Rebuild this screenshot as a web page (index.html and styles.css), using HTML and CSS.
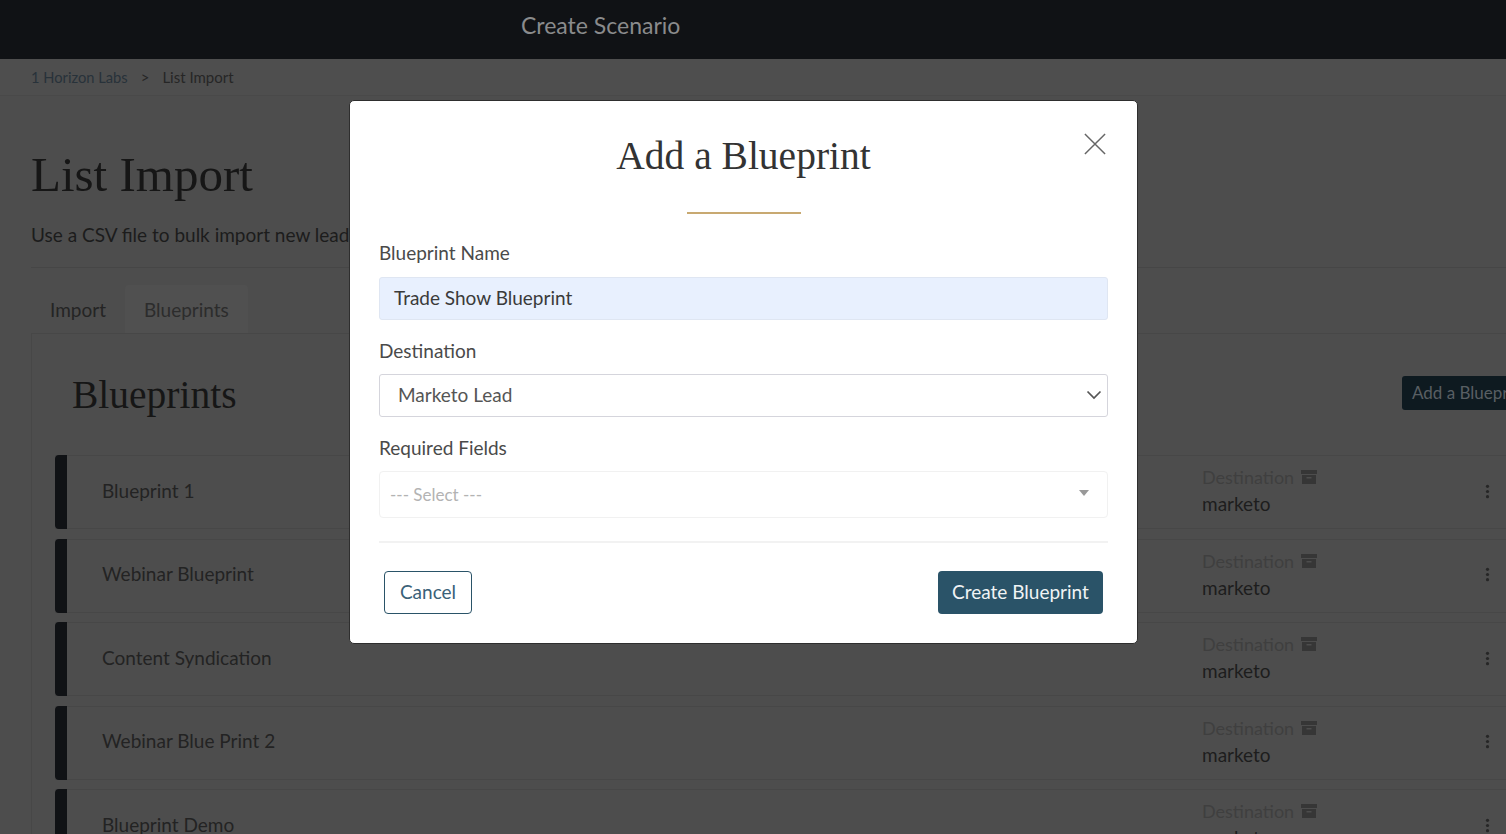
FILE: index.html
```html
<!DOCTYPE html>
<html lang="en">
<head>
  <meta charset="UTF-8">
  <title>List Import</title>
  <link rel="stylesheet" href="styles.css">
</head>
<body>
  <header class="topbar">
    <span class="topbar-title">Create Scenario</span>
  </header>

  <nav class="crumbs">
    <a class="crumb-link">1 Horizon Labs</a>
    <span class="crumb-sep">&gt;</span>
    <span>List Import</span>
  </nav>

  <main class="page">
    <h1>List Import</h1>
    <p class="lead">Use a CSV file to bulk import new leads</p>

    <div class="tabs">
      <a class="tab">Import</a>
      <a class="tab tab-active">Blueprints</a>
    </div>

    <section class="card">
      <div class="card-head">
        <h2>Blueprints</h2>
        <button class="add-btn">Add a Blueprint</button>
      </div>

      <div class="row">
        <span class="row-bar"></span>
        <span class="row-name">Blueprint 1</span>
        <div class="row-dest">
          <div class="dest-label">Destination
            <svg class="box-icon" viewBox="0 0 16 16"><path d="M0 1h16v4H0zM1 6h14v9H1zM5.500 8v1.500h5V8z" fill-rule="evenodd"/></svg>
          </div>
          <div class="dest-value">marketo</div>
        </div>
        <svg class="dots" viewBox="0 0 4 16"><circle cx="2" cy="2.500" r="1.700"/><circle cx="2" cy="8" r="1.700"/><circle cx="2" cy="13.500" r="1.700"/></svg>
      </div>

      <div class="row">
        <span class="row-bar"></span>
        <span class="row-name">Webinar Blueprint</span>
        <div class="row-dest">
          <div class="dest-label">Destination
            <svg class="box-icon" viewBox="0 0 16 16"><path d="M0 1h16v4H0zM1 6h14v9H1zM5.500 8v1.500h5V8z" fill-rule="evenodd"/></svg>
          </div>
          <div class="dest-value">marketo</div>
        </div>
        <svg class="dots" viewBox="0 0 4 16"><circle cx="2" cy="2.500" r="1.700"/><circle cx="2" cy="8" r="1.700"/><circle cx="2" cy="13.500" r="1.700"/></svg>
      </div>

      <div class="row">
        <span class="row-bar"></span>
        <span class="row-name">Content Syndication</span>
        <div class="row-dest">
          <div class="dest-label">Destination
            <svg class="box-icon" viewBox="0 0 16 16"><path d="M0 1h16v4H0zM1 6h14v9H1zM5.500 8v1.500h5V8z" fill-rule="evenodd"/></svg>
          </div>
          <div class="dest-value">marketo</div>
        </div>
        <svg class="dots" viewBox="0 0 4 16"><circle cx="2" cy="2.500" r="1.700"/><circle cx="2" cy="8" r="1.700"/><circle cx="2" cy="13.500" r="1.700"/></svg>
      </div>

      <div class="row">
        <span class="row-bar"></span>
        <span class="row-name">Webinar Blue Print 2</span>
        <div class="row-dest">
          <div class="dest-label">Destination
            <svg class="box-icon" viewBox="0 0 16 16"><path d="M0 1h16v4H0zM1 6h14v9H1zM5.500 8v1.500h5V8z" fill-rule="evenodd"/></svg>
          </div>
          <div class="dest-value">marketo</div>
        </div>
        <svg class="dots" viewBox="0 0 4 16"><circle cx="2" cy="2.500" r="1.700"/><circle cx="2" cy="8" r="1.700"/><circle cx="2" cy="13.500" r="1.700"/></svg>
      </div>

      <div class="row">
        <span class="row-bar"></span>
        <span class="row-name">Blueprint Demo</span>
        <div class="row-dest">
          <div class="dest-label">Destination
            <svg class="box-icon" viewBox="0 0 16 16"><path d="M0 1h16v4H0zM1 6h14v9H1zM5.500 8v1.500h5V8z" fill-rule="evenodd"/></svg>
          </div>
          <div class="dest-value">marketo</div>
        </div>
        <svg class="dots" viewBox="0 0 4 16"><circle cx="2" cy="2.500" r="1.700"/><circle cx="2" cy="8" r="1.700"/><circle cx="2" cy="13.500" r="1.700"/></svg>
      </div>
    </section>
  </main>

  <div class="modal">
    <button class="modal-close" aria-label="Close">
      <svg viewBox="0 0 24 24"><path d="M1 1l22 22M23 1L1 23"/></svg>
    </button>
    <h3 class="modal-title">Add a Blueprint</h3>
    <div class="modal-rule"></div>

    <label class="field-label">Blueprint Name</label>
    <div class="input input-filled">Trade Show Blueprint</div>

    <label class="field-label">Destination</label>
    <div class="input input-select">
      <span>Marketo Lead</span>
      <svg class="chevron" viewBox="0 0 16 10"><path d="M1.500 1.500L8 8l6.500-6.500"/></svg>
    </div>

    <label class="field-label">Required Fields</label>
    <div class="multi-select">
      <span>--- Select ---</span>
      <span class="caret"></span>
    </div>

    <div class="modal-foot">
      <button class="btn btn-outline">Cancel</button>
      <button class="btn btn-primary">Create Blueprint</button>
    </div>
  </div>
</body>
</html>
```

FILE: styles.css
```css
* {
  box-sizing: border-box;
}

html, body {
  height: 100%;
}

body {
  margin: 0;
  overflow: hidden;
  background: #4d4d4d;
  color: #1a1a1a;
  font-family: "Lato", "Open Sans", sans-serif;
}

.topbar {
  height: 59px;
  background: #101215;
  padding: 11px 0 0 521px;
}

.topbar-title {
  font-size: 23px;
  color: #8a8b8c;
}

.crumbs {
  height: 37px;
  padding: 0 31px;
  display: flex;
  align-items: center;
  gap: 13px;
  font-size: 15px;
  color: #262626;
  background: #4e4e4e;
  border-bottom: 1px solid #494949;
}

.crumb-link {
  color: #28323a;
  font-size: 14.700px;
}

.page {
  padding: 0 0 0 31px;
  width: 1560px;
}

h1 {
  margin: 52px 0 0;
  font: 400 49px/54px "Liberation Serif", serif;
  color: #161616;
}

.lead {
  margin: 21px 0 0;
  padding-bottom: 20px;
  font-size: 19px;
  line-height: 24px;
  color: #1c1c1c;
  border-bottom: 1px solid #464646;
}

.tabs {
  display: flex;
  margin-top: 17px;
  height: 48px;
}

.tab {
  padding: 13px 19px 0;
  font-size: 19px;
  color: #242424;
}

.tab-active {
  background: #505050;
  border-radius: 4px 4px 0 0;
  color: #2c2c2c;
}

.card {
  border: 1px solid #474747;
  padding: 0 0 0 23px;
}

.card-head {
  display: flex;
  justify-content: space-between;
  align-items: center;
  height: 121px;
  padding: 0 0 0 17px;
}

h2 {
  margin: 0;
  font: 400 39.500px/42px "Liberation Serif", serif;
  color: #161616;
}

.add-btn {
  width: 160px;
  height: 34px;
  margin-right: -3px;
  margin-top: -4px;
  border: 0;
  border-radius: 3px;
  background: #0e1a20;
  color: #595f63;
  font: 17px "Lato", sans-serif;
  text-align: left;
  padding: 0 10px;
}

.row {
  display: flex;
  align-items: center;
  height: 74px;
  margin-bottom: 9.600px;
  border-top: 1px solid #474747;
  border-bottom: 1px solid #474747;
}

.row-bar {
  width: 12px;
  height: 74px;
  background: #101215;
  border-radius: 4px 0 0 4px;
}

.row-name {
  margin: 0 0 4px 35px;
  width: 1100px;
  font-size: 19px;
  color: #232323;
}

.row-dest {
  width: 283px;
  margin-bottom: 4px;
  padding-top: 1px;
}

.dest-label {
  display: flex;
  align-items: center;
  gap: 7px;
  font-size: 18px;
  line-height: 24px;
  color: #3f3f3f;
}

.box-icon {
  width: 16px;
  height: 16px;
  fill: #363636;
}

.dest-value {
  margin-top: 3px;
  font-size: 19px;
  line-height: 24px;
  color: #1d1d1d;
}

.dots {
  width: 5px;
  height: 15px;
  margin-bottom: 2px;
  fill: #262626;
}

/* modal */
.modal {
  position: fixed;
  top: 100px;
  left: 349px;
  width: 789px;
  height: 544px;
  padding: 0 29px;
  background: #fff;
  border: 1px solid #2e2e2e;
  border-radius: 5px;
}

.modal-close {
  position: absolute;
  top: 32px;
  right: 31px;
  width: 22px;
  height: 22px;
  padding: 0;
  border: 0;
  background: none;
}

.modal-close svg {
  display: block;
  fill: none;
  stroke: #666;
  stroke-width: 1.600;
}

.modal-title {
  margin: 32px 0 0;
  text-align: center;
  font: 400 39.500px/46px "Liberation Serif", serif;
  color: #333;
}

.modal-rule {
  width: 114px;
  height: 2px;
  margin: 33px auto 28px;
  background: #c8a971;
}

.field-label {
  display: block;
  font-size: 19px;
  line-height: 24px;
  color: #4a4a4a;
  margin-bottom: 11px;
}

.modal-rule + .field-label {
  margin: -1px 0 12px;
}

.input {
  height: 43px;
  margin-bottom: 19px;
  padding-bottom: 2px;
  border-radius: 3px;
  font-size: 19px;
  display: flex;
  align-items: center;
  color: #3a3a3a;
}

.input-filled {
  padding-left: 14px;
  background: #e8f0fe;
  border: 1px solid #dfe6f2;
}

.input-select {
  justify-content: space-between;
  padding-left: 18px;
  padding-right: 5px;
  border: 1px solid #d5d5dc;
  color: #555;
}

.chevron {
  width: 16px;
  height: 10px;
  fill: none;
  stroke: #555;
  stroke-width: 1.700;
}

.multi-select {
  height: 47px;
  padding: 0 18px 0 10px;
  border: 1px solid #f1f1f1;
  border-radius: 4px;
  display: flex;
  align-items: center;
  justify-content: space-between;
  font-size: 17px;
  color: #b3b3b3;
}

.caret {
  width: 0;
  height: 0;
  margin-top: -4px;
  border-left: 5.500px solid transparent;
  border-right: 5.500px solid transparent;
  border-top: 6px solid #999;
}

.modal-foot {
  display: flex;
  justify-content: space-between;
  margin-top: 23px;
  padding: 28px 5px 0;
  border-top: 2px solid #f2f2f2;
}

.btn {
  height: 43px;
  padding-bottom: 3px;
  border-radius: 4px;
  font: 19px "Lato", sans-serif;
}

.btn-outline {
  width: 88px;
  background: #fff;
  border: 1px solid #2a5368;
  color: #3a6178;
}

.btn-primary {
  width: 165px;
  background: #2a5368;
  border: 0;
  color: #f0f3f5;
}
```
